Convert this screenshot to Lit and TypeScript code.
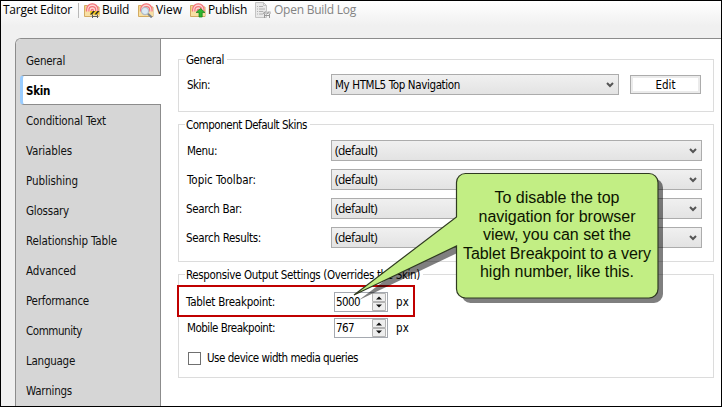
import { LitElement, html, css, svg } from "lit";
import { customElement, property } from "lit/decorators.js";

/** A one-line label whose tracking is adjusted so that it spans `span` pixels. */
@customElement("fit-label")
class FitLabel extends LitElement {
  @property() text = "";
  @property({ type: Number }) span = 0;

  static styles = css`
    :host { display: inline-block; white-space: pre; flex: none; }
    .t { display: inline-block; white-space: pre; }
  `;

  updated() {
    const el = this.renderRoot.querySelector(".t") as HTMLElement;
    el.style.letterSpacing = "0px";
    const natural = el.getBoundingClientRect().width;
    const gap = (this.span - natural) / this.text.length;
    el.style.letterSpacing = gap.toFixed(3) + "px";
  }

  render() {
    return html`<span class="t">${this.text}</span>`;
  }
}

const label = (text: string, span: number) =>
  html`<fit-label .text=${text} .span=${span}></fit-label>`;

const folder = svg`
  <path d="M.5 3.500h4l1 1.500h9.500v9.500H.5z" fill="#f3d48a" stroke="#d3ab62"/>
  <path d="M2 10V7.500a6.300 6.300 0 0 1 12.600 0V10z" fill="#fcd9d6"/>
  <path d="M2.600 10V7.500a5.700 5.700 0 0 1 11.400 0V10M4.900 10V8a3.400 3.400 0 0 1 6.800 0v2M7.200 10V8.500a1.100 1.100 0 0 1 2.200 0V10" fill="none" stroke="#f4747a" stroke-width="1.200"/>
  <path d="M1 9.500h14V14H1z" fill="#f8e0a4"/>`;

const icons: Record<string, unknown> = {
  build: svg`${folder}
    <path d="M6 9h9.500v3.500H6z" fill="#f4c720"/>
    <path d="M6 12.500l3-3.500h2l-3 3.500zM10.500 12.500l3-3.500h2l-3 3.500z" fill="#2b2b2b"/>
    <path d="M8.500 12.500V16M13.500 12.500V16M8 14.500h6" stroke="#5c5c5c" fill="none"/>`,
  view: svg`${folder}
    <circle cx="7" cy="9" r="3.600" fill="#dceaf6" stroke="#b3bcc5" stroke-width="1.200"/>
    <path d="M10 11.800l3.800 3.700" stroke="#7e868f" stroke-width="2"/>`,
  publish: svg`${folder}
    <path d="M10.500 6.500l4.500 4h-2.800V15H9v-4.500H6z" fill="#2fb62f" stroke="#168218" stroke-width=".7"/>`,
  log: svg`
    <path d="M.5.500h8l3 3v12H.5z" fill="#e9e9e9" stroke="#c4c4c4"/>
    <path d="M8.500.500v3h3" fill="none" stroke="#c4c4c4"/>
    <path d="M2 4.500h1M4 4.500h4M2 7h1M4 7h6M2 9.500h1M4 9.500h4M2 12h1M4 12h4" stroke="#b0b0b0"/>
    <path d="M8 9.500h8v2.500H8z" fill="#c9c9c9"/>
    <path d="M8.500 12l2-2.500M12 12l2-2.500M9.500 12v4M14.500 12v4M9 13.500h6" stroke="#999" fill="none"/>`,
};

const tabs: [string, number][] = [
  ["General", 39], ["Skin", 24], ["Conditional Text", 80], ["Variables", 46],
  ["Publishing", 52], ["Glossary", 43], ["Relationship Table", 91], ["Advanced", 50],
  ["Performance", 63], ["Community", 56], ["Language", 49], ["Warnings", 46],
];

const skins: [string, number][] = [
  ["Menu:", 30], ["Topic Toolbar:", 69], ["Search Bar:", 56], ["Search Results:", 75],
];

const note: [string, number][] = [
  ["To disable the top", 125], ["navigation for browser", 157], ["view, you can set the", 148],
  ["Tablet Breakpoint to a very", 188], ["high number, like this.", 154],
];

@customElement("app-root")
class AppRoot extends LitElement {
  static styles = css`
    * { box-sizing: border-box; }
    :host {
      display: block; width: 722px; height: 407px; overflow: hidden; position: relative;
      font: 11.500px/14px "DejaVu Sans Condensed", "DejaVu Sans", sans-serif;
      font-stretch: condensed; color: #000;
    }
    .window {
      height: 407px; border: 1px solid #000; display: flex; flex-direction: column;
      background: #f0f0f0 linear-gradient(#fff, #f0f0f0) 0 0 / 100% 25px no-repeat;
    }
    .seg { font: 12px/16px "Open Sans", "Noto Sans", sans-serif; }
    .toolbar { height: 37px; display: flex; align-items: flex-start; padding-left: 2px; }
    .title { width: 75px; padding-top: 1px; }
    .rule { width: 1px; height: 15px; margin: 2px 5px 0 0; background: #b9b9b9; }
    .tool { display: flex; gap: 2px; padding-top: 1px; }
    .tool svg { display: block; width: 16px; height: 16px; }
    .tool.build { width: 54px; }
    .tool.view { width: 52px; }
    .tool.publish { width: 65px; }
    .tool.log { gap: 3px; color: #838383; }
    .panel {
      flex: 1; min-height: 0; margin-left: 14px; display: flex;
      border: solid #8c8c8c; border-width: 1px 0 0 1px; border-top-left-radius: 6px;
      background: #fff; overflow: hidden;
    }
    .tabs { width: 145px; background: #d6d6d6; padding-top: 6px; display: flex; flex-direction: column; flex: none; box-shadow: inset -1px 0 #8c8c8c; }
    .tab { height: 30px; flex: none; padding: 9px 0 0 10px; color: #111; }
    .tab.on {
      margin-left: 4px; padding: 8px 0 0 3px; background: #fff; color: #000; font-weight: bold;
      border: solid #8c8c8c; border-width: 1px 0; border-left: 3px solid #99ccff;
      border-radius: 4px 0 0 4px;
    }
    .content { flex: 1; padding: 20px 7px 0 17px; }
    .group { border: 1px solid #dcdcdc; position: relative; }
    .legend { position: absolute; left: 6px; top: -7px; padding: 0 3px 0 1px; background: #fff; white-space: nowrap; }
    .g1 { height: 53px; margin-bottom: 12px; padding-top: 14px; }
    .g2 { height: 138px; margin-bottom: 12px; padding-top: 15px; display: flex; flex-direction: column; gap: 8px; }
    .g3 { height: 104px; padding-top: 14px; }
    .row { display: flex; align-items: center; padding-left: 8px; height: 21px; }
    .name { width: 144px; flex: none; }
    .row.out { padding-left: 7px; }
    .row.out .name { width: 145px; }
    .select {
      width: 371px; height: 21px; border: 1px solid #acacac; padding: 0 4px 0 3px; flex: none;
      background: linear-gradient(#f0f0f0, #e3e3e3); display: flex; align-items: center; justify-content: space-between;
    }
    .select.short { width: 288px; margin-right: 11px; }
    .select svg { width: 8px; height: 7px; display: block; }
    .button {
      width: 71px; height: 19px; border: 1px solid #acacac; background: #fff;
      box-shadow: inset 0 0 0 2px #ebebeb; display: flex; align-items: center; justify-content: center;
    }
    .num { height: 26px; align-items: center; }
    .spin { width: 54px; height: 20px; border: 1px solid #a5a9b0; display: flex; margin: 0 8px 0 3px; padding-left: 1px; background: #fff; justify-content: space-between; align-items: center; }
    .steps { width: 14px; height: 18px; margin-right: 1px; display: block; }
    .check { gap: 6px; padding-left: 9px; margin-top: 4px; height: 26px; }
    .box { width: 13px; height: 13px; border: 1px solid #707070; background: #fff; }
    .mark { position: absolute; left: 177px; top: 285px; width: 238px; height: 32px; border: 2px solid #c00000; }
    .callout { position: absolute; left: 0; top: 0; width: 722px; height: 407px; }
    .note {
      position: absolute; left: 456px; top: 173px; width: 202px; height: 126px; padding-top: 16px;
      font: 16px/18.500px "Liberation Sans", Arial, sans-serif; color: #0c1400;
      display: flex; flex-direction: column; align-items: center;
    }
  `;

  private arrow() {
    return html`<svg viewBox="0 0 8 7"><path d="M1 2l3 3 3-3" fill="none" stroke="#555" stroke-width="2"/></svg>`;
  }

  private spinner(value: string, width: number) {
    return html`<div class="spin">${label(value, width)}
      <svg class="steps" viewBox="0 0 14 18">
        <path d="M.5.500h13v8H.5zM.5 9.500h13v8H.5z" fill="#eee" stroke="#b4b4b4"/>
        <path d="M4 6.500l3-3 3 3zM4 11.500l3 3 3-3z" fill="#111"/>
      </svg></div>`;
  }

  private tool(kind: string, text: string, width: number) {
    return html`<div class="tool ${kind}"><svg viewBox="0 0 16 16">${icons[kind]}</svg>${label(text, width)}</div>`;
  }

  render() {
    return html`
      <div class="window">
        <div class="toolbar seg">
          <div class="title">${label("Target Editor", 69)}</div>
          <div class="rule"></div>
          ${this.tool("build", "Build", 27)}
          ${this.tool("view", "View", 26)}
          ${this.tool("publish", "Publish", 39)}
          ${this.tool("log", "Open Build Log", 82)}
        </div>
        <div class="panel">
          <div class="tabs">
            ${tabs.map(([t, w], i) => html`<div class="tab ${i === 1 ? "on" : ""}">${label(t, w)}</div>`)}
          </div>
          <div class="content">
            <div class="group g1">
              <div class="legend">${label("General", 38)}</div>
              <div class="row">
                <div class="name">${label("Skin:", 23)}</div>
                <div class="select short">${label("My HTML5 Top Navigation", 125)}${this.arrow()}</div>
                <div class="button">${label("Edit", 20)}</div>
              </div>
            </div>
            <div class="group g2">
              <div class="legend">${label("Component Default Skins", 121)}</div>
              ${skins.map(([t, w], i) => html`<div class="row ${i > 1 ? "out" : ""}">
                <div class="name">${label(t, w)}</div>
                <div class="select seg">${label("(default)", 42)}${this.arrow()}</div>
              </div>`)}
            </div>
            <div class="group g3">
              <div class="legend">${label("Responsive Output Settings (Overrides the Skin)", 234)}</div>
              <div class="row out num"><div class="name">${label("Tablet Breakpoint:", 89)}</div>${this.spinner("5000", 24)}${label("px", 13)}</div>
              <div class="row num"><div class="name">${label("Mobile Breakpoint:", 88)}</div>${this.spinner("767", 18)}${label("px", 13)}</div>
              <div class="row check"><span class="box"></span>${label("Use device width media queries", 151)}</div>
            </div>
          </div>
        </div>
      </div>
      <div class="mark"></div>
      <svg class="callout" viewBox="0 0 722 407">
        <path transform="translate(5 5)" fill="#000" fill-opacity=".5" d="M465.500 173.500H649a9 9 0 0 1 9 9V289a9 9 0 0 1-9 9H465.500a9 9 0 0 1-9-9V246L354 295 456.500 217V182.500a9 9 0 0 1 9-9z"/>
        <path fill="#c2ee84" stroke="#2f3a20" stroke-width="1.200" d="M465.500 173.500H649a9 9 0 0 1 9 9V289a9 9 0 0 1-9 9H465.500a9 9 0 0 1-9-9V246L354 295 456.500 217V182.500a9 9 0 0 1 9-9z"/>
      </svg>
      <div class="note">${note.map(([t, w]) => label(t, w))}</div>
    `;
  }
}
